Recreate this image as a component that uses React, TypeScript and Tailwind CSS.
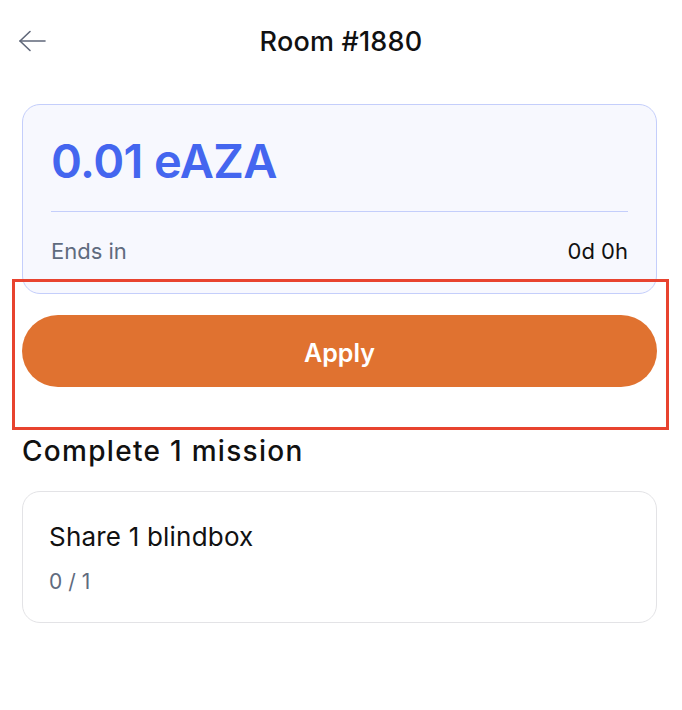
const BackArrow = () => (
    <svg width="28" height="22" viewBox="0 0 28 22" fill="none" stroke="currentColor" strokeWidth="1.6" strokeLinecap="round" strokeLinejoin="round">
        <path d="M2 11H27" />
        <path d="M12 1.5L2 11L12 20.5" />
    </svg>
);

const App = () => {
    return (
        <div className="relative min-h-screen bg-white font-['Inter',sans-serif] text-[#111]">
            {/* Header */}
            <header className="relative flex h-[82px] items-center pl-[18px]">
                <button className="text-[#5f6779]">
                    <BackArrow />
                </button>
                <h1 className="absolute left-1/2 -translate-x-1/2 text-[27px] font-medium leading-none tracking-[0.2px]">
                    Room #1880
                </h1>
            </header>

            <main className="pl-[22px] pr-[25px] pt-[22px]">
                {/* Reward card */}
                <div className="rounded-[18px] border border-[#c4cefb] bg-[#f7f8fe] px-[28px] pt-[32px] pb-[31px]">
                    <div className="text-[47px] font-semibold leading-none tracking-[-0.6px] text-[#4466ef]">
                        0.01 eAZA
                    </div>
                    <div className="mt-[27px] h-px bg-[#c4cefb]" />
                    <div className="mt-[28px] flex items-center justify-between text-[22px] leading-none">
                        <span className="text-[#5f6b7e]">Ends in</span>
                        <span className="text-[#111]">0d 0h</span>
                    </div>
                </div>

                {/* Apply button */}
                <button className="mt-[21px] flex h-[72px] w-full items-center justify-center rounded-full bg-[#e07230] pt-[6px] text-[25px] font-semibold text-white">
                    Apply
                </button>

                {/* Missions */}
                <h2 className="mt-[50px] text-[28px] font-medium leading-none tracking-[1.3px]">Complete 1 mission</h2>

                <div className="mt-[26px] rounded-[18px] border border-[#e3e3e6] px-[26px] pt-[32px] pb-[30px]">
                    <div className="text-[26px] leading-none tracking-[0.2px]">Share 1 blindbox</div>
                    <div className="mt-[21px] text-[21px] leading-none text-[#5f6b7e]">0 / 1</div>
                </div>
            </main>

            {/* Highlight annotation */}
            <div className="pointer-events-none absolute left-[12px] top-[279px] h-[151px] w-[657px] border-[3px] border-[#e8432f]" />
        </div>
    );
};

export default App;
